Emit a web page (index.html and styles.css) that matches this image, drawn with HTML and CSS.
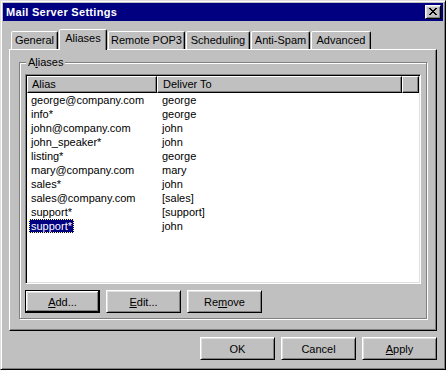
FILE: index.html
```html
<!DOCTYPE html>
<html lang="en">
<head>
    <meta charset="UTF-8">
    <title>Mail Server Settings</title>
    <link rel="stylesheet" href="styles.css">
</head>
<body>
    <div class="window">
        <div class="titlebar">
            <span class="title">Mail Server Settings</span>
            <button class="close-btn" aria-label="Close">
                <svg width="8" height="7" viewBox="0 0 8 7" shape-rendering="crispEdges">
                    <path d="M0 0h2v1h1v1h2V1h1V0h2v1H7v1H6v1H5v1h1v1h1v1h1v1H6V6H5V5H3v1H2v1H0V6h1V5h1V4h1V3H2V2H1V1H0z"/>
                </svg>
            </button>
        </div>

        <div class="dialog-body">
            <div class="tabs">
                <div class="tab tab-general">General</div>
                <div class="tab tab-aliases active">Aliases</div>
                <div class="tab tab-pop3">Remote POP3</div>
                <div class="tab tab-scheduling">Scheduling</div>
                <div class="tab tab-spam">Anti-Spam</div>
                <div class="tab tab-advanced">Advanced</div>
            </div>

            <div class="tab-panel">
                <fieldset class="group">
                    <legend>A<u>l</u>iases</legend>

                    <div class="listview">
                        <div class="lv-header">
                            <div class="lv-col col-alias">Alias</div>
                            <div class="lv-col col-deliver">Deliver To</div>
                            <div class="lv-col col-rest"></div>
                        </div>
                        <div class="lv-row"><div class="cell col-alias"><span>george@company.com</span></div><div class="cell col-deliver">george</div></div>
                        <div class="lv-row"><div class="cell col-alias"><span>info*</span></div><div class="cell col-deliver">george</div></div>
                        <div class="lv-row"><div class="cell col-alias"><span>john@company.com</span></div><div class="cell col-deliver">john</div></div>
                        <div class="lv-row"><div class="cell col-alias"><span>john_speaker*</span></div><div class="cell col-deliver">john</div></div>
                        <div class="lv-row"><div class="cell col-alias"><span>listing*</span></div><div class="cell col-deliver">george</div></div>
                        <div class="lv-row"><div class="cell col-alias"><span>mary@company.com</span></div><div class="cell col-deliver">mary</div></div>
                        <div class="lv-row"><div class="cell col-alias"><span>sales*</span></div><div class="cell col-deliver">john</div></div>
                        <div class="lv-row"><div class="cell col-alias"><span>sales@company.com</span></div><div class="cell col-deliver">[sales]</div></div>
                        <div class="lv-row"><div class="cell col-alias"><span>support*</span></div><div class="cell col-deliver">[support]</div></div>
                        <div class="lv-row selected"><div class="cell col-alias"><span>support*</span></div><div class="cell col-deliver">john</div></div>
                    </div>

                    <div class="button-row">
                        <button class="btn default"><u>A</u>dd...</button>
                        <button class="btn"><u>E</u>dit...</button>
                        <button class="btn">Re<u>m</u>ove</button>
                    </div>
                </fieldset>
            </div>

            <div class="dialog-buttons">
                <button class="btn">OK</button>
                <button class="btn">Cancel</button>
                <button class="btn"><u>A</u>pply</button>
            </div>
        </div>
    </div>
</body>
</html>
```

FILE: styles.css
```css
* {
    margin: 0;
    padding: 0;
    box-sizing: border-box;
}

body {
    background: #c0c0c0;
    font-family: 'Liberation Sans', Arial, sans-serif;
    font-size: 11px;
    color: #000;
}

.window {
    width: 446px;
    height: 370px;
    padding: 2px;
    background: #c0c0c0;
    border: 1px solid;
    border-color: #dfdfdf #000 #000 #dfdfdf;
    box-shadow: inset 1px 1px #fff, inset -1px -1px #808080;
}

/* title bar */
.titlebar {
    height: 18px;
    background: #000080;
    display: flex;
    align-items: center;
    justify-content: space-between;
    padding: 0 2px 0 3px;
}

.title {
    color: #fff;
    font-weight: bold;
    font-size: 11px;
    letter-spacing: 0.3px;
}

.close-btn {
    width: 16px;
    height: 14px;
    background: #c0c0c0;
    border: 1px solid;
    border-color: #fff #000 #000 #fff;
    box-shadow: inset 1px 1px #dfdfdf, inset -1px -1px #808080;
    display: flex;
    align-items: center;
    justify-content: center;
    padding: 0 1px 1px 0;
}

.dialog-body {
    padding: 8px 6px 0 6px;
}

/* tabs */
.tabs {
    display: flex;
    align-items: flex-end;
    height: 20px;
    gap: 1px;
    padding-left: 2px;
}

.tab {
    height: 18px;
    line-height: 16px;
    text-align: center;
    background: #c0c0c0;
    border: 1px solid;
    border-bottom: 0;
    border-color: #fff #000 transparent #fff;
    border-radius: 2px 2px 0 0;
    box-shadow: inset -1px 0 #808080;
    white-space: nowrap;
}

.tab.active {
    height: 21px;
    margin-bottom: -1px;
    position: relative;
    z-index: 1;
    line-height: 17px;
}

.tab-general { width: 47px; }
.tab-aliases { width: 48px; }
.tab-pop3 { width: 77px; }
.tab-scheduling { width: 64px; }
.tab-spam { width: 59px; }
.tab-advanced { width: 60px; }

.tab-panel {
    width: 428px;
    height: 282px;
    border: 1px solid;
    border-color: #fff #000 #000 #fff;
    box-shadow: inset -1px -1px #808080;
    padding: 6px 10px 0 9px;
}

/* group box */
.group {
    height: 263px;
    border: 1px solid #808080;
    box-shadow: inset 1px 1px #fff, 1px 1px #fff;
    padding: 5px 5px 0 5px;
}

.group legend {
    margin-left: 1px;
    padding: 0 2px;
    line-height: 13px;
    background: #c0c0c0;
}

/* list view */
.listview {
    width: 396px;
    height: 210px;
    background: #fff;
    border: 1px solid;
    border-color: #808080 #fff #fff #808080;
    box-shadow: inset 1px 1px #000, inset -1px -1px #dfdfdf;
    padding: 1px;
    overflow: hidden;
}

.lv-header {
    display: flex;
    height: 17px;
}

.lv-col {
    height: 17px;
    line-height: 15px;
    background: #c0c0c0;
    border: 1px solid;
    border-color: #fff #000 #000 #fff;
    box-shadow: inset -1px -1px #808080;
    white-space: nowrap;
}

.lv-col.col-alias {
    width: 130px;
    padding-left: 4px;
}

.lv-col.col-deliver {
    width: 245px;
    padding-left: 5px;
}

.lv-col.col-rest {
    width: 17px;
}

.lv-row {
    display: flex;
    height: 14px;
    line-height: 14px;
}

.cell {
    white-space: nowrap;
}

.cell.col-alias {
    width: 130px;
    padding-left: 2px;
}

.cell.col-alias span {
    display: inline-block;
    height: 14px;
    padding: 0 2px;
}

.cell.col-deliver {
    padding-left: 5px;
}

.lv-row.selected .col-alias span {
    background: #000080;
    color: #fff;
    outline: 1px dotted #ffff80;
    outline-offset: -1px;
}

/* buttons */
.btn {
    width: 75px;
    height: 23px;
    font-family: inherit;
    font-size: 11px;
    color: #000;
    background: #c0c0c0;
    border: 1px solid;
    border-color: #fff #000 #000 #fff;
    box-shadow: inset 1px 1px #dfdfdf, inset -1px -1px #808080;
}

.btn.default {
    border-color: #000;
    box-shadow: inset -1px -1px #000, inset 1px 1px #fff, inset -2px -2px #808080, inset 2px 2px #dfdfdf;
}

.button-row {
    display: flex;
    gap: 6px;
    margin-top: 6px;
}

.dialog-buttons {
    display: flex;
    justify-content: flex-end;
    gap: 6px;
    margin-top: 6px;
    width: 428px;
}
```
